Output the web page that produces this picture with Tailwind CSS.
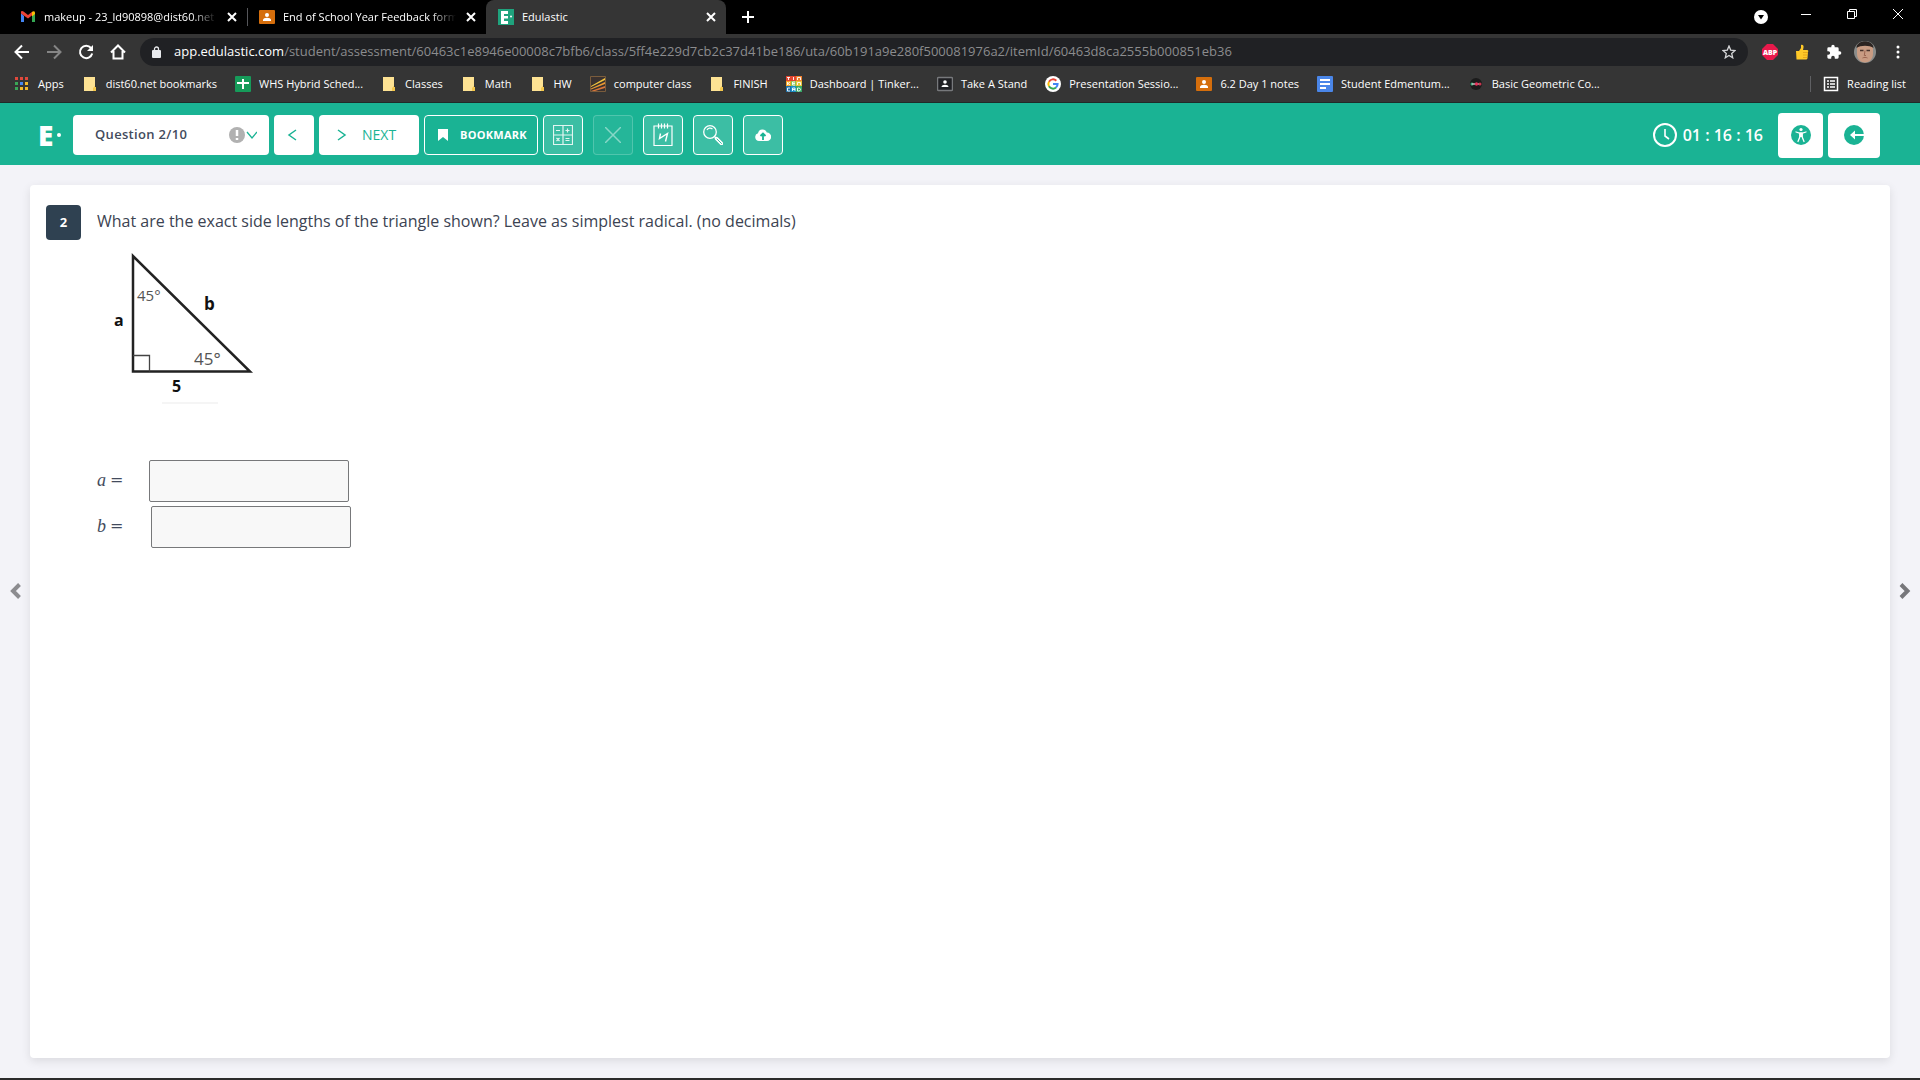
<!DOCTYPE html>
<html lang="en">
<head>
    <meta charset="UTF-8">
    <meta name="viewport" content="width=device-width, initial-scale=1.0">
    <title>Edulastic</title>
    <script src="https://cdn.jsdelivr.net/npm/@tailwindcss/browser@4"></script>
</head>
<body class="h-screen flex flex-col overflow-hidden bg-[#f3f3f8] font-['Open_Sans',sans-serif]">

    <!-- shared icons -->
    <svg class="hidden">
        <symbol id="folder" viewBox="0 0 16 16"><path d="M2 1h11v10h1v4H2z" fill="#fde293"/><path d="M11 15v-3l2-2v1h1v4z" fill="#f5c84c"/></symbol>
        <symbol id="classroom" viewBox="0 0 16 16"><rect y="1" width="16" height="14" rx="1" fill="#d56e0c"/><circle cx="8" cy="6" r="2" fill="#fff"/><path d="M4 11c0-3 8-3 8 0v1H4z" fill="#fff"/></symbol>
        <symbol id="close" viewBox="0 0 10 10"><path d="M1 1l8 8M9 1L1 9" stroke="#fff" stroke-width="2" fill="none"/></symbol>
    </svg>

    <!-- tab strip -->
    <div class="h-[34px] shrink-0 bg-black flex items-stretch text-white text-[11px] whitespace-nowrap">
        <div class="w-[247px] pl-5 pr-2.5 flex items-center">
            <svg class="size-4 shrink-0" viewBox="0 0 16 16"><path d="M1 4v9h3V7z" fill="#4285f4"/><path d="M12 7v6h3V4z" fill="#34a853"/><path d="M1 3c0-1 1.500-1.500 2.500-.5L8 6l4.500-3.500V6L8 9.500 1 4.500z" fill="#ea4335"/><path d="M12 3c1.500-1.500 3-.8 3 .7V5l-3 2.500z" fill="#fbbc04"/></svg>
            <span class="ml-2 flex-1 overflow-hidden mask-r-from-85%">makeup - 23_ld90898@dist60.net</span>
            <button aria-label="Close tab" class="ml-2.5 shrink-0"><svg class="size-2.5"><use href="#close"/></svg></button>
        </div>
        <div class="w-[239px] pl-3 pr-2.5 flex items-center relative">
            <span class="absolute left-0 top-2 h-[18px] w-px bg-[#55565a]"></span>
            <svg class="size-4 shrink-0"><use href="#classroom"/></svg>
            <span class="ml-2 flex-1 overflow-hidden mask-r-from-85%">End of School Year Feedback form</span>
            <button aria-label="Close tab" class="ml-2.5 shrink-0"><svg class="size-2.5"><use href="#close"/></svg></button>
        </div>
        <div class="w-[240px] pl-3 pr-2.5 flex items-center bg-[#353535] rounded-t-lg">
            <svg class="size-4 shrink-0" viewBox="0 0 16 16"><rect width="16" height="16" fill="#1fa37d"/><path d="M3 2h7v3H6v2h4v2.500H6V12h4v3H3z" fill="#fff"/><circle cx="13" cy="7.500" r="1" fill="#fff"/></svg>
            <span class="ml-2 flex-1">Edulastic</span>
            <button aria-label="Close tab" class="shrink-0"><svg class="size-2.5"><use href="#close"/></svg></button>
        </div>
        <button aria-label="New tab" class="ml-4 mr-auto"><svg class="size-3" viewBox="0 0 12 12"><path d="M6 0v12M0 6h12" stroke="#fff" stroke-width="2"/></svg></button>
        <button aria-label="Search tabs" class="mr-8"><svg class="size-3.5" viewBox="0 0 14 14"><circle cx="7" cy="7" r="7" fill="#fff"/><path d="M4 5h6L7 9.500z" fill="#000"/></svg></button>
        <div class="flex items-start pt-2 pr-4 gap-[34px]">
            <button aria-label="Minimize"><svg class="size-3" viewBox="0 0 12 12"><path d="M1 6.500h10" stroke="#fff"/></svg></button>
            <button aria-label="Restore"><svg class="size-3" viewBox="0 0 12 12"><path d="M1.500 3.500h7v7h-7zM3.500 3.500v-2h7v7h-2" stroke="#fff" fill="none"/></svg></button>
            <button aria-label="Close"><svg class="size-3" viewBox="0 0 12 12"><path d="M1 1l10 10M11 1L1 11" stroke="#fff"/></svg></button>
        </div>
    </div>

    <!-- address bar -->
    <div class="h-8 shrink-0 bg-[#353535] flex items-center pt-1 pl-3.5 pr-3.5 text-white">
        <button aria-label="Back" class="mr-4"><svg class="size-4" viewBox="0 0 16 16"><path d="M15 8H2M8 1.500L1.500 8 8 14.500" stroke="#fff" stroke-width="2" fill="none"/></svg></button>
        <button aria-label="Forward" class="mr-4"><svg class="size-4" viewBox="0 0 16 16"><path d="M1 8h13M8 1.500L14.500 8 8 14.500" stroke="#858585" stroke-width="2" fill="none"/></svg></button>
        <button aria-label="Reload" class="mr-4"><svg class="size-4" viewBox="0 0 16 16"><path d="M13 4a6.200 6.200 0 1 0 1.200 5.500" stroke="#fff" stroke-width="2" fill="none"/><path d="M15 1v6H9z" fill="#fff"/></svg></button>
        <button aria-label="Home" class="mr-3.5"><svg class="size-4" viewBox="0 0 16 16"><path d="M1 8.500L8 1.500l7 7M3.500 7v7.500h9V7" stroke="#fff" stroke-width="2" fill="none"/></svg></button>
        <div class="flex-1 h-7 rounded-full bg-[#202124] flex items-center pl-3 pr-3 text-[13px] whitespace-nowrap">
            <svg class="w-2.5 h-3 mr-3" viewBox="0 0 10 12"><rect y="4" width="9" height="8" rx="1" fill="#e8eaed"/><path d="M2.500 5V3a2 2 0 0 1 4 0v2" stroke="#e8eaed" stroke-width="1.300" fill="none"/></svg>
            <span>app.edulastic.com</span><span class="flex-1 text-[#8b8c8e]">/student/assessment/60463c1e8946e00008c7bfb6/class/5ff4e229d7cb2c37d41be186/uta/60b191a9e280f500081976a2/itemId/60463d8ca2555b000851eb36</span>
            <button aria-label="Bookmark this tab"><svg class="size-3.5" viewBox="0 0 14 14"><path d="M7 1l1.700 4.100 4.300.4-3.300 2.900 1 4.400L7 10.500l-3.700 2.300 1-4.400L1 5.500l4.300-.4z" stroke="#d5d6d8" stroke-width="1.300" fill="none"/></svg></button>
        </div>
        <div class="flex items-center ml-3.5">
            <button aria-label="AdBlock Plus" class="mr-4"><svg class="size-4" viewBox="0 0 16 16"><path d="M5 0h6l5 5v6l-5 5H5l-5-5V5z" fill="#e8194b"/><text x="8" y="11" text-anchor="middle" font-size="7" font-weight="800" fill="#fff">ABP</text></svg></button>
            <button aria-label="Thumbs up" class="mr-4"><svg class="size-4" viewBox="0 0 16 16"><path d="M2 7h3l2-3V1c1.500-1 3 .5 2.500 2.500L9 6h4c1.500 0 1.500 1.500 1 2l-.5 6c0 1-1 1.500-2 1.500H2.500z" fill="#ffc928"/><path d="M9 8.500h5M9 11h4.500M9 13.500h4" stroke="#dc9a12" stroke-width=".7"/></svg></button>
            <button aria-label="Extensions" class="mr-3"><svg class="size-4" viewBox="0 0 24 24"><path d="M20.500 11H19V7a2 2 0 0 0-2-2h-4V3.500a2.500 2.500 0 0 0-5 0V5H4a2 2 0 0 0-2 2v3.800h1.500a2.700 2.700 0 0 1 0 5.400H2V20a2 2 0 0 0 2 2h3.800v-1.500a2.700 2.700 0 0 1 5.400 0V22H17a2 2 0 0 0 2-2v-4h1.500a2.500 2.500 0 0 0 0-5z" fill="#fff"/></svg></button>
            <button aria-label="Profile" class="mr-3.5"><svg class="size-[22px]" viewBox="0 0 22 22"><defs><clipPath id="face"><circle cx="11" cy="11" r="11"/></clipPath></defs><g clip-path="url(#face)"><path d="M0 0h22v22H0z" fill="#8b8d8b"/><path d="M3 8c0-9 16-9 16 0v5c0 5-4 8.500-8 8.500S3 18 3 13z" fill="#c99c83"/><path d="M2.500 7c0-9 17-9 17 0-4-3-13-3-17 0z" fill="#2c2421"/><path d="M6 9.500h3.500M12.500 9.500H16" stroke="#4a342c" stroke-width="1.300"/><path d="M11 9.500l-.7 5h1.700M8.500 17c1.500-.8 3.500-.8 5 0" stroke="#9a6450" fill="none"/></g></svg></button>
            <button aria-label="Menu"><svg class="size-4" viewBox="0 0 16 16" fill="#fff"><circle cx="8" cy="3" r="1.500"/><circle cx="8" cy="8" r="1.500"/><circle cx="8" cy="13" r="1.500"/></svg></button>
        </div>
    </div>

    <!-- bookmarks -->
    <nav class="h-[37px] shrink-0 bg-[#353535] border-b border-[#1f2a28] flex items-center gap-[18px] pl-3.5 pr-3.5 text-white text-[11px] whitespace-nowrap">
        <a href="#" class="flex items-center gap-2"><svg class="size-4" viewBox="0 0 16 16"><path d="M1 1h3v3H1zM6 1h3v3H6zM11 1h3v3h-3z" fill="#e0493c"/><path d="M1 6h3v3H1z" fill="#3aa757"/><path d="M6 6h3v3H6z" fill="#4688f1"/><path d="M11 6h3v3h-3zM6 11h3v3H6zM11 11h3v3h-3z" fill="#f2b92c"/><path d="M1 11h3v3H1z" fill="#3aa757"/></svg>Apps</a>
        <a href="#" class="flex items-center gap-2"><svg class="size-4"><use href="#folder"/></svg>dist60.net bookmarks</a>
        <a href="#" class="flex items-center gap-2"><svg class="size-4" viewBox="0 0 16 16"><rect width="16" height="16" rx="1" fill="#169b5a"/><path d="M7 3h2v10H7zM2 6h12v2H2z" fill="#fff"/></svg>WHS Hybrid Sched...</a>
        <a href="#" class="flex items-center gap-2"><svg class="size-4"><use href="#folder"/></svg>Classes</a>
        <a href="#" class="flex items-center gap-2"><svg class="size-4"><use href="#folder"/></svg>Math</a>
        <a href="#" class="flex items-center gap-2"><svg class="size-4"><use href="#folder"/></svg>HW</a>
        <a href="#" class="flex items-center gap-2"><svg class="size-4" viewBox="0 0 16 16"><path d="M.5.500h15v15H.5z" fill="#3a3230" stroke="#7a5c3c"/><path d="M1 10L15 2v2L1 11z" fill="#f3c43d"/><path d="M1 12.500L15 6v2L1 13.500z" fill="#ec9a32"/><path d="M1 15l14-5v2L5 15z" fill="#d9763a"/></svg>computer class</a>
        <a href="#" class="flex items-center gap-2"><svg class="size-4"><use href="#folder"/></svg>FINISH</a>
        <a href="#" class="flex items-center gap-2"><svg class="size-4" viewBox="0 0 16 16"><path d="M0 0h5v5H0zM5 0h5v5H5z" fill="#e2452f"/><path d="M10 0h6v5h-6z" fill="#f07f2d"/><path d="M0 5h5v5H0z" fill="#f5a623"/><path d="M5 5h5v5H5z" fill="#8cc152"/><path d="M10 5h6v5h-6z" fill="#e9c53a"/><path d="M0 10h5v6H0z" fill="#1d6fa8"/><path d="M5 10h5v6H5z" fill="#1e8ec4"/><path d="M10 10h6v6h-6z" fill="#37a866"/><path d="M1 1.500h3M2.500 1.500V4M7.500 1v3M11.500 4V1.500h3V4M1.500 6v3M4 6L2 7.500 4 9M9 6H6.500v3H9M6.500 7.500H9M11.500 9V6.500h3V9M4 12H1.500v3H4M6.500 15v-3H9v3M6.500 13.500H9M11.500 12h2l1 1.500-1 1.500h-2z" stroke="#fff" fill="none" stroke-width=".9"/></svg>Dashboard | Tinker...</a>
        <a href="#" class="flex items-center gap-2"><svg class="size-4" viewBox="0 0 16 16"><rect x=".5" y="1.500" width="15" height="13" rx="1" fill="#202124" stroke="#77797c" stroke-width="1.500"/><circle cx="8" cy="6" r="1.800" fill="#fff"/><path d="M4.500 11c0-3 7-3 7 0z" fill="#fff"/></svg>Take A Stand</a>
        <a href="#" class="flex items-center gap-2"><svg class="size-4" viewBox="0 0 16 16" fill="none" stroke-width="2"><circle cx="8" cy="8" r="8" fill="#fff"/><path d="M4 5.700A4.600 4.600 0 0 1 11.300 4.700" stroke="#ea4335"/><path d="M4 5.700a4.600 4.600 0 0 0 0 4.600" stroke="#fbbc05"/><path d="M4 10.300a4.600 4.600 0 0 0 7 1.200" stroke="#34a853"/><path d="M11 11.500A4.600 4.600 0 0 0 12.600 8H8" stroke="#4285f4"/></svg>Presentation Sessio...</a>
        <a href="#" class="flex items-center gap-2"><svg class="size-4"><use href="#classroom"/></svg>6.2 Day 1 notes</a>
        <a href="#" class="flex items-center gap-2"><svg class="size-4" viewBox="0 0 16 16"><rect width="16" height="16" rx="1" fill="#4a86e8"/><path d="M3 4h10M3 8h10M3 12h6" stroke="#fff" stroke-width="2"/></svg>Student Edmentum...</a>
        <a href="#" class="flex items-center gap-2"><svg class="size-4" viewBox="0 0 16 16"><circle cx="8" cy="8" r="6" fill="#1b1b1b"/><circle cx="4" cy="8" r="1.500" fill="#3fb37f"/><path d="M4 8h8" stroke="#bbb" stroke-width="1.500"/><circle cx="8.500" cy="8" r="1.700" fill="#e2335b"/><circle cx="12" cy="8" r="1.500" fill="#c7364f"/></svg>Basic Geometric Co...</a>
        <a href="#" class="ml-auto flex items-center gap-2 border-l border-[#5f6063] pl-3"><svg class="size-4" viewBox="0 0 16 16"><path d="M1.500 1.500h13v13h-13z" stroke="#fff" stroke-width="1.500" fill="none"/><path d="M4 5h2M4 8h2M4 11h2M7 5h5M7 8h5M7 11h5" stroke="#fff" stroke-width="1.500"/></svg>Reading list</a>
    </nav>

    <!-- assessment toolbar -->
    <header class="h-[62px] shrink-0 bg-[#1ab394] flex items-center pt-0.5 pl-[38px] pr-10">
        <div class="w-[35px] flex items-center text-white text-[28px] leading-none font-extrabold">E<span class="ml-1 size-1 rounded-full bg-white"></span></div>
        <div class="relative w-[196px] h-10">
            <select aria-label="Question" class="size-full appearance-none rounded bg-white pl-[22px] text-[13px] font-semibold tracking-wide text-[#434b5d]">
                <option>Question 2/10</option>
            </select>
            <svg class="absolute right-3 top-3 w-7 h-4 pointer-events-none" viewBox="0 0 28 16"><circle cx="8" cy="8" r="8" fill="#b1b1b1"/><path d="M8 3v6M8 11v2" stroke="#fff" stroke-width="2.500"/><path d="M18 5l5 6 5-6" stroke="#1ab394" stroke-width="1.300" fill="none"/></svg>
        </div>
        <button aria-label="Previous" class="ml-[5px] size-10 rounded bg-white flex items-center justify-center pr-1"><svg class="w-2.5 h-3" viewBox="0 0 10 12"><path d="M9 1L2 6l7 5" stroke="#1ab394" stroke-width="1.500" fill="none"/></svg></button>
        <button class="ml-[5px] w-[100px] h-10 rounded bg-white flex items-center pl-[18px] text-sm text-[#1ab394]"><svg class="w-2.5 h-3 mr-[15px]" viewBox="0 0 10 12"><path d="M1 1l7 5-7 5" stroke="#1ab394" stroke-width="1.500" fill="none"/></svg>NEXT</button>
        <button class="ml-[5px] w-[114px] h-10 rounded border border-white flex items-center pl-3 text-[11px] font-bold tracking-wide text-white"><svg class="w-3 h-3 mr-[11px]" viewBox="0 0 12 12"><path d="M1 0h10v12L6 8l-5 4z" fill="#fff"/></svg>BOOKMARK</button>
        <div class="ml-[5px] flex gap-2.5">
            <button aria-label="Calculator" class="size-10 rounded border border-white bg-white/15 flex items-center justify-center"><svg class="size-5" viewBox="0 0 20 20"><path d="M.5.500h19v19H.5zM10 .5v19M.5 10h19M3 5.500h4M12.500 5.500h4M14.500 3.500v4M3.500 13l3 3M6.500 13l-3 3M12.500 13.500h4M12.500 15.500h4" stroke="#fff" stroke-opacity=".85" stroke-width="1.200" fill="none"/></svg></button>
            <button aria-label="Cross out" disabled class="size-10 rounded border border-white/20 bg-white/5 flex items-center justify-center"><svg class="size-4" viewBox="0 0 16 16"><path d="M0 0l16 16M16 0L0 16" stroke="#fff" stroke-opacity=".45" stroke-width="1.500"/></svg></button>
            <button aria-label="Scratchpad" class="size-10 rounded border border-white bg-white/15 flex items-center justify-center"><svg class="w-5 h-6" viewBox="0 0 20 24"><path d="M5 3H1v19.500h18V3h-4M5 3h10M5.500 .5v5M8.500 .5v5M11.500 .5v5M14.500 .5v5" stroke="#fff" stroke-width="1.200" fill="none"/><path d="M7.500 10.500L6.500 15.500l8-5-2 8" stroke="#fff" stroke-width="1.400" fill="none"/></svg></button>
            <button aria-label="Magnify" class="size-10 rounded border border-white bg-white/15 flex items-center justify-center"><svg class="size-5" viewBox="0 0 20 20"><circle cx="7" cy="7" r="6.300" stroke="#fff" stroke-width="1.300" fill="none"/><path d="M4 5c1-2 3.500-2.500 5.500-1M11.500 11.500l2 2" stroke="#fff" stroke-width="1.200" fill="none"/><path d="M13.500 13.500l5 5" stroke="#fff" stroke-width="3.500" stroke-linecap="round"/><path d="M14 14l4.500 4.500" stroke="#3fbda3" stroke-width="1" stroke-linecap="round"/></svg></button>
            <button aria-label="Upload" class="size-10 rounded border border-white bg-white/15 flex items-center justify-center"><svg class="w-4 h-3" viewBox="0 0 16 12"><path d="M4 12a4 4 0 0 1-1-7.800A4.600 4.600 0 0 1 11.800 3.500 4.200 4.200 0 0 1 12 12z" fill="#fff"/><path d="M8 11V5M5.500 7L8 4.500 10.500 7" stroke="#1ab394" stroke-width="1.800" fill="none"/></svg></button>
        </div>
        <div class="ml-auto flex items-center text-white">
            <svg class="size-6 mr-1.5" viewBox="0 0 24 24"><circle cx="12" cy="12" r="11" stroke="#fff" stroke-width="2" fill="none"/><path d="M12 6v7l4 3" stroke="#fff" stroke-width="1.600" fill="none"/></svg>
            <time class="text-base font-semibold">01 : 16 : 16</time>
            <button aria-label="Accessibility" class="ml-[15px] size-[45px] rounded bg-white flex items-center justify-center"><svg class="size-5" viewBox="0 0 20 20"><circle cx="10" cy="10" r="10" fill="#1ab394"/><circle cx="10" cy="4.500" r="1.600" fill="#fff"/><path d="M5 7l3.500 1h3L15 7M8.800 8v4L7 16.500M11.200 8v4l1.800 4.500" stroke="#fff" stroke-width="1.300" stroke-linecap="round" fill="none"/><path d="M8.500 8h3v4h-3z" fill="#fff"/></svg></button>
            <button aria-label="Exit" class="ml-[5px] w-[52px] h-[45px] rounded bg-white flex items-center justify-center"><svg class="size-5" viewBox="0 0 20 20"><circle cx="10" cy="10" r="10" fill="#1ab394"/><path d="M10 9h10v2H10z" fill="#fff"/><path d="M6 10l5-4.500v9z" fill="#fff"/></svg></button>
        </div>
    </header>

    <!-- question -->
    <main class="flex-1 flex items-stretch pt-5 pb-5 border-b-2 border-[#2b2b2b]">
        <button aria-label="Previous item" class="w-[30px] shrink-0 flex items-center justify-center -mt-[62px]"><svg class="size-4" viewBox="0 0 16 16"><path d="M12.500 1.500L6 8l6.500 6.500" stroke="#8c8c90" stroke-width="4" fill="none"/></svg></button>
        <section class="flex-1 rounded bg-white shadow-[0_3px_10px_rgba(0,0,0,0.1)] p-4 pt-5 flex items-start gap-4 text-[#434b5d]">
            <div class="size-[35px] shrink-0 rounded bg-[#2f4151] text-white text-[13px] font-bold flex items-center justify-center">2</div>
            <div class="flex-1">
                <p class="h-[35px] text-base leading-8 text-[#3c4352]">What are the exact side lengths of the triangle shown? Leave as simplest radical. (no decimals)</p>
                <svg class="block w-[180px] h-[180px]" viewBox="0 0 180 180">
                    <path d="M36 16v115.500h117z" stroke="#222" stroke-width="2.500" fill="none"/>
                    <path d="M36 115.500h16.500v16" stroke="#444" stroke-width="1.300" fill="none"/>
                    <path d="M65 163h56" stroke="#f5f5f5" stroke-width="2"/>
                    <text x="40" y="61" font-size="15" fill="#555">45°</text>
                    <text x="97" y="125" font-size="17" fill="#555">45°</text>
                    <text x="17" y="86" font-size="16" font-weight="700" fill="#111">a</text>
                    <text x="107" y="70" font-size="17" font-weight="700" fill="#111">b</text>
                    <text x="75" y="152" font-size="16" font-weight="700" fill="#111">5</text>
                </svg>
                <div class="mt-10 space-y-1">
                    <div class="flex items-center">
                        <label for="side-a" class="w-[52px] pb-0.5 flex items-center gap-1 font-['Liberation_Serif',serif] text-lg"><i>a</i><span class="font-['DejaVu_Serif',serif] text-base">=</span></label>
                        <input id="side-a" type="text" class="w-[200px] h-[42px] rounded-xs border border-[#77787a] bg-[#f8f8f8] px-3">
                    </div>
                    <div class="flex items-center">
                        <label for="side-b" class="w-[54px] pb-0.5 flex items-center gap-1 font-['Liberation_Serif',serif] text-lg"><i>b</i><span class="font-['DejaVu_Serif',serif] text-base">=</span></label>
                        <input id="side-b" type="text" class="w-[200px] h-[42px] rounded-xs border border-[#77787a] bg-[#f8f8f8] px-3">
                    </div>
                </div>
            </div>
        </section>
        <button aria-label="Next item" class="w-[30px] shrink-0 flex items-center justify-center -mt-[62px]"><svg class="size-4" viewBox="0 0 16 16"><path d="M4 1.500L10.500 8 4 14.500" stroke="#77777b" stroke-width="4" fill="none"/></svg></button>
    </main>

</body>
</html>
